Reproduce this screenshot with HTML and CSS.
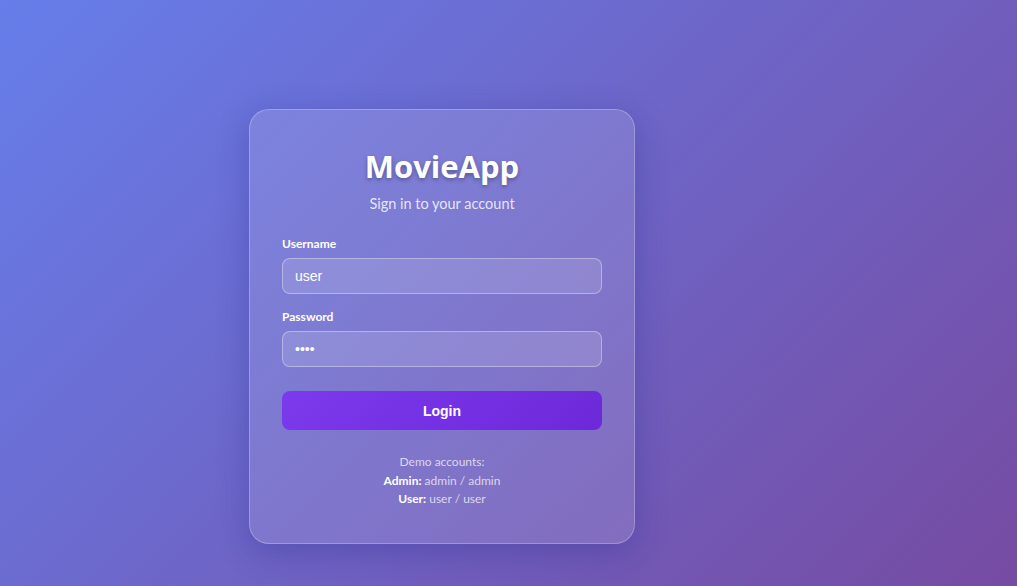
FILE: index.html
```html
<!DOCTYPE html>
<html>
<head>
<meta charset="utf-8">
<link rel="stylesheet" href="styles.css">
</head>
<body>
<div class="page">
  <div class="card">
    <h1 class="title">MovieApp</h1>
    <p class="subtitle">Sign in to your account</p>
    <form class="form">
      <div class="field">
        <label class="label">Username</label>
        <input class="input" type="text" value="user">
      </div>
      <div class="field">
        <label class="label">Password</label>
        <input class="input" type="password" value="user">
      </div>
      <button class="btn" type="button">Login</button>
    </form>
    <div class="demo">
      <p>Demo accounts:</p>
      <p><strong>Admin:</strong> admin / admin</p>
      <p><strong>User:</strong> user / user</p>
    </div>
  </div>
</div>
</body>
</html>
```
FILE: styles.css
```css
* { box-sizing: border-box; }
html, body { margin: 0; height: 100%; }
body {
  font-family: Lato, "Open Sans", sans-serif;
  background: linear-gradient(135deg, #667eea 0%, #764ba2 100%);
  color: #fff;
  overflow: hidden;
}
.page {
  padding: 109px 0 0 249px;
}
.card {
  width: 386px;
  height: 435px;
  padding: 32px 32px;
  border-radius: 20px;
  background: rgba(255,255,255,0.12);
  border: 1px solid rgba(255,255,255,0.25);
  box-shadow: 0 8px 32px rgba(31,38,135,0.3);
  display: flex;
  flex-direction: column;
}
.title {
  margin: 4px 0 0;
  text-align: center;
  font-family: "Open Sans", Lato, sans-serif;
  font-size: 31px;
  line-height: 40px;
  font-weight: 700;
  text-shadow: 0 2px 4px rgba(0,0,0,0.3);
}
.subtitle {
  margin: 9px 0 0;
  text-align: center;
  font-size: 14.5px;
  line-height: 18px;
  color: rgba(255,255,255,0.82);
}
.form {
  margin-top: 23px;
  display: flex;
  flex-direction: column;
}
.field {
  display: flex;
  flex-direction: column;
  margin-bottom: 15px;
}
.label {
  font-size: 12px;
  font-weight: 700;
  line-height: 16px;
  margin-bottom: 6px;
}
.input {
  height: 36px;
  width: 100%;
  border-radius: 8px;
  border: 1px solid rgba(255,255,255,0.35);
  background: rgba(255,255,255,0.13);
  color: #fff;
  padding: 0 12px;
  font-family: "Liberation Sans", Arial, sans-serif;
  font-size: 14px;
  outline: none;
}
.btn {
  margin-top: 9px;
  height: 39px;
  border: none;
  border-radius: 8px;
  background: linear-gradient(135deg, #7c3aed 0%, #6d28d9 100%);
  color: #fff;
  font-family: "Liberation Sans", Arial, sans-serif;
  font-size: 14px;
  font-weight: 700;
}
.demo {
  margin-top: 23px;
  text-align: center;
  font-size: 12px;
  line-height: 18.5px;
  color: rgba(255,255,255,0.72);
}
.demo p { margin: 0; }
.demo strong { color: #fff; }
```
